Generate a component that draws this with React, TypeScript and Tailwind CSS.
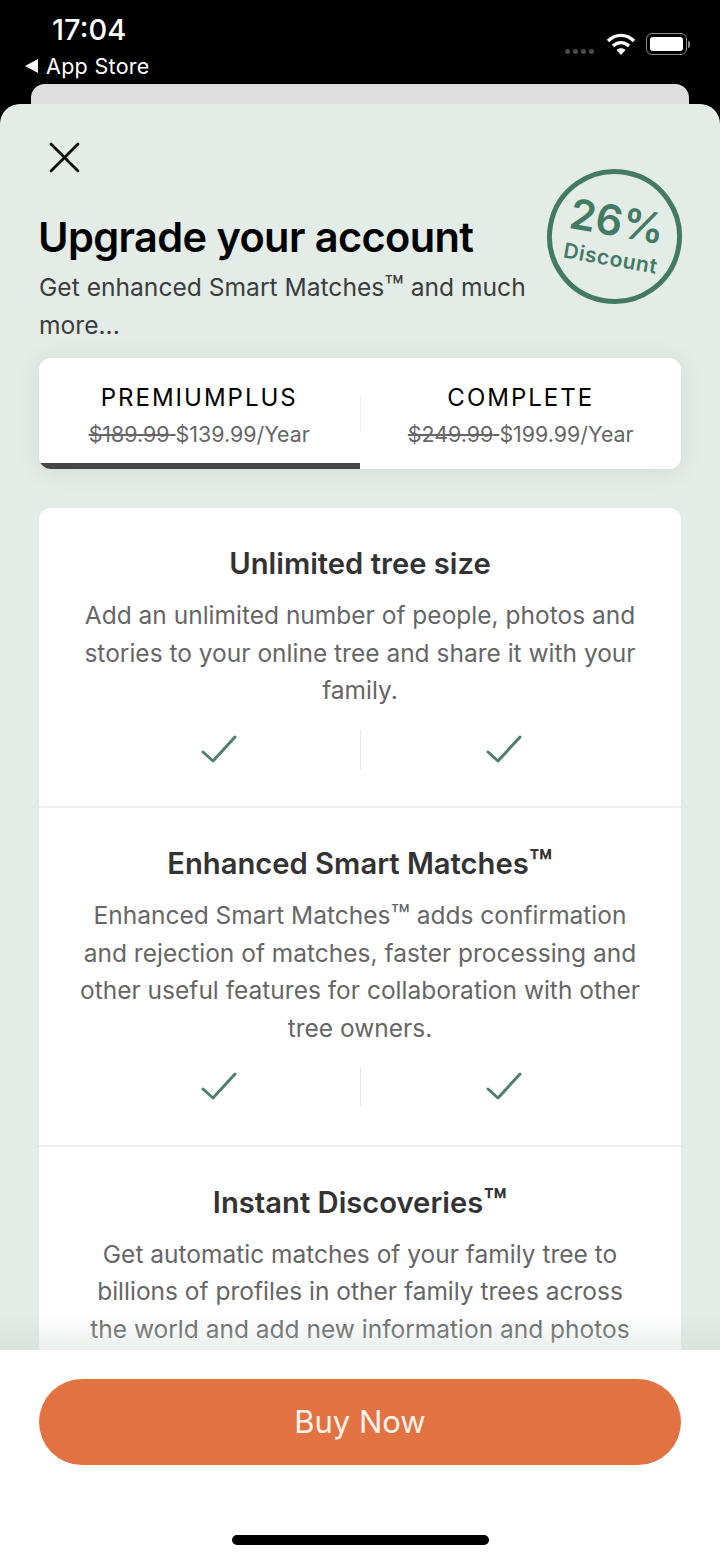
// Upgrade paywall sheet - plan tabs, feature list and buy button
const features = [
  {
    title: 'Unlimited tree size',
    lines: ['Add an unlimited number of people, photos and', 'stories to your online tree and share it with your', 'family.'],
  },
  {
    title: 'Enhanced Smart Matches™',
    lines: [
      'Enhanced Smart Matches™ adds confirmation',
      'and rejection of matches, faster processing and',
      'other useful features for collaboration with other',
      'tree owners.',
    ],
  },
  {
    title: 'Instant Discoveries™',
    lines: [
      'Get automatic matches of your family tree to',
      'billions of profiles in other family trees across',
      'the world and add new information and photos',
    ],
  },
]

// Inter's trademark sign is smaller than the one in the design
function Tm({ text }: { text: string }) {
  const parts = text.split('™')
  if (parts.length === 1) return <>{text}</>
  return (
    <>
      {parts[0]}
      <span className="text-[1.3em] leading-[0] align-[-0.08em]">™</span>
      {parts[1]}
    </>
  )
}

function Check() {
  return (
    <svg width="36" height="30" viewBox="0 0 36 30" fill="none" stroke="#50806d" strokeWidth="3" strokeLinecap="round" strokeLinejoin="round">
      <path d="M2 17 L12 26 L34 2" />
    </svg>
  )
}

function StatusBar() {
  return (
    <div className="h-[84px] shrink-0 flex justify-between text-white">
      <div className="pl-[24px] pt-[12px]">
        <div className="pl-[28px] text-[29px] leading-[36px] font-medium">17:04</div>
        <div className="flex items-center gap-[8px] text-[21.5px] leading-[28px] mt-[4px] tracking-[0.3px]">
          <svg width="14" height="16" viewBox="0 0 14 16" fill="white">
            <path d="M14 1 V15 L1 8 Z" />
          </svg>
          App Store
        </div>
      </div>
      <div className="flex items-start pt-[32px] pr-[30px]">
        <div className="flex gap-[3px] mt-[17px] mr-[12px]">
          <span className="w-[5px] h-[5px] rounded-full bg-[#4a4a4a]" />
          <span className="w-[5px] h-[5px] rounded-full bg-[#4a4a4a]" />
          <span className="w-[5px] h-[5px] rounded-full bg-[#4a4a4a]" />
          <span className="w-[5px] h-[5px] rounded-full bg-[#4a4a4a]" />
        </div>
        <svg width="30" height="24" viewBox="0 0 30 24" fill="none" stroke="white" strokeWidth="3.4" className="mr-[10px]">
          <path d="M2 9 C9.5 1.5 20.5 1.5 28 9" />
          <path d="M7 14 C11.5 9.5 18.5 9.5 23 14" />
          <path d="M15 23 L10.5 18 C13 15.8 17 15.8 19.5 18 Z" fill="white" stroke="none" />
        </svg>
        <div className="flex items-center mt-[1px]">
          <div className="w-[41px] h-[22px] rounded-[6px] border-[1.5px] border-[#8a8a8a] p-[3px]">
            <div className="w-full h-full rounded-[3px] bg-white" />
          </div>
          <div className="w-[2px] h-[7px] rounded-r-full bg-[#8a8a8a] ml-[1px]" />
        </div>
      </div>
    </div>
  )
}

function PlanTab({ name, was, now, active }: { name: string; was: string; now: string; active?: boolean }) {
  return (
    <div className="relative flex-1 flex flex-col items-center pt-[23px]">
      <div className="text-[24px] leading-[34px] tracking-[2px] text-black">{name}</div>
      <div className="text-[21.4px] leading-[30px] mt-[4px] text-[#666666]">
        <span className="line-through decoration-2">{was} </span>
        {now}/Year
      </div>
      {active && <div className="absolute bottom-0 left-0 right-0 h-[6px] bg-[#454545]" />}
    </div>
  )
}

export default function App() {
  return (
    <div className="relative w-[720px] h-[1559px] bg-black overflow-hidden flex flex-col font-['Inter',sans-serif]">
      <StatusBar />
      <div className="shrink-0 h-[20px] mx-[31px] rounded-t-[14px] bg-[#dedede]" />

      <div className="relative flex-1 min-h-0 rounded-t-[20px] bg-[#e3ece7] overflow-hidden px-[39px]">
        {/* close */}
        <div className="pt-[36px]">
          <svg width="34" height="34" viewBox="0 0 34 34" fill="none" stroke="#0c0c0c" strokeWidth="2.8" strokeLinecap="round" className="ml-[8px]">
            <path d="M4 4 L31 31 M31 4 L4 31" />
          </svg>
        </div>

        <h1 className="mt-[37px] ml-[-1px] text-[41.5px] leading-[52px] font-semibold text-black tracking-[-0.6px]">Upgrade your account</h1>
        <p className="mt-[6px] text-[24.6px] leading-[37.5px] text-[#3c3c3c] w-[500px]">
          <Tm text="Get enhanced Smart Matches™ and much" /> more...
        </p>

        {/* discount badge */}
        <div className="absolute left-[547px] top-[65px] w-[135px] h-[135px] rounded-full border-[5px] border-[#437a64] text-[#437a64] flex flex-col items-center justify-center rotate-[10deg]">
          <div className="text-[42px] leading-[38px] font-semibold">26%</div>
          <div className="text-[21px] leading-[24px] font-semibold tracking-[0.6px] mt-[7px]">Discount</div>
        </div>

        {/* plan tabs */}
        <div className="relative mt-[14px] h-[111px] flex rounded-[12px] bg-white overflow-hidden shadow-[0_2px_24px_rgba(0,0,0,0.08)]">
          <PlanTab name="PREMIUMPLUS" was="$189.99" now="$139.99" active />
          <div className="w-px h-[36px] mt-[38px] bg-[#f0f0f0]" />
          <PlanTab name="COMPLETE" was="$249.99" now="$199.99" />
        </div>

        {/* feature list */}
        <div className="mt-[39px] rounded-t-[12px] bg-white">
          {features.map((f, i) => (
            <div key={f.title} className="pt-[36px] h-[338.5px] first:h-[300px] border-b-2 border-[#eeeeee]">
              <div className="text-center text-[29.2px] leading-[40px] font-semibold text-[#333333]">
                <Tm text={f.title} />
              </div>
              <div className="mt-[13px] text-center text-[24.5px] leading-[37.5px] text-[#666666]">
                {f.lines.map((l) => (
                  <div key={l}>
                    <Tm text={l} />
                  </div>
                ))}
              </div>
              {i < 2 && (
                <div className="mt-[20px] flex items-start">
                  <div className="w-[321px] pl-[162px] pt-[5px]">
                    <Check />
                  </div>
                  <div className="w-px h-[40px] bg-[#e8e8e8]" />
                  <div className="pl-[125px] pt-[5px]">
                    <Check />
                  </div>
                </div>
              )}
            </div>
          ))}
        </div>

        {/* fade above the footer */}
        <div className="absolute left-0 right-0 bottom-0 h-[36px] bg-gradient-to-b from-transparent to-[#c9d8d0]/40" />
      </div>

      <div className="shrink-0 h-[209px] bg-white px-[39px] pt-[29px] relative">
        <div className="h-[86px] rounded-full bg-[#e27241] flex items-center justify-center text-[31px] text-[#fdf3ec]">Buy Now</div>
        <div className="absolute left-[232px] bottom-[14px] w-[257px] h-[10px] rounded-full bg-black" />
      </div>
    </div>
  )
}
